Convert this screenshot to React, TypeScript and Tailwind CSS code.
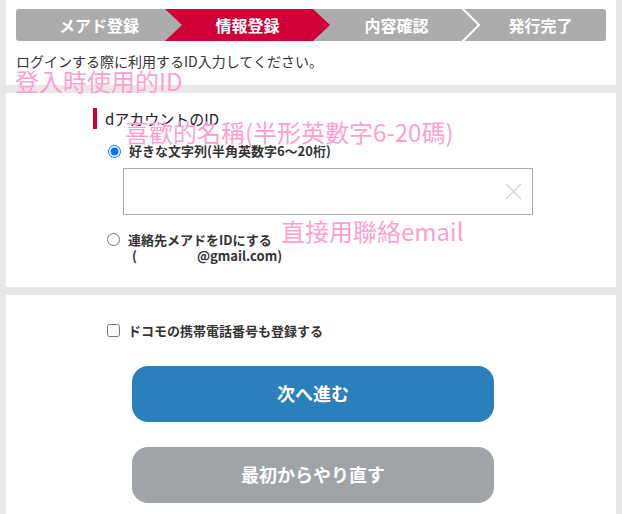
import { X } from "lucide-react";

const steps = ["メアド登録", "情報登録", "内容確認", "発行完了"];

function StepBar() {
  return (
    <div className="relative flex h-8 overflow-hidden rounded-[3px] bg-[#acacac] text-[16px] font-bold text-white">
      <div className="mr-[-17px] flex w-[166px] shrink-0 items-center justify-center">
        {steps[0]}
      </div>
      <div className="relative z-10 mr-[-17px] flex w-[165px] shrink-0 items-center justify-center bg-[#cf0037] [clip-path:polygon(0_0,148px_0,165px_50%,148px_100%,0_100%,17px_50%)]">
        {steps[1]}
      </div>
      <div className="relative mr-[-17px] flex w-[167px] shrink-0 items-center justify-center">
        {steps[2]}
        <svg
          className="absolute right-0 top-0"
          width="18"
          height="32"
          viewBox="0 0 18 32"
        >
          <polyline
            points="0,-1 17,16 0,33"
            fill="none"
            stroke="white"
            strokeWidth="2"
          />
        </svg>
      </div>
      <div className="flex flex-1 items-center justify-center pl-[12px]">
        {steps[3]}
      </div>
    </div>
  );
}

export default function App() {
  return (
    <div className="relative min-h-screen bg-[#e8e8e8] px-[6px] font-['Noto_Sans_CJK_JP',sans-serif] text-[#333]">
      <div className="flex flex-col gap-[8px]">
        <section className="h-[85px] bg-white px-[10px] pt-[9px]">
          <StepBar />
          <p className="mt-[10px] text-[14px] leading-[20px]">
            ログインする際に利用するID入力してください。
          </p>
        </section>

        <section className="h-[194px] bg-white pl-[87px] pt-[15px]">
          <h2 className="h-[21px] border-l-4 border-[#cf0037] pl-[8px] text-[15px] leading-[21px] text-[#222]">
            dアカウントのID
          </h2>
          <label className="mt-[15px] ml-[15px] flex h-[14px] items-center gap-[8px] text-[13px] font-bold">
            <input type="radio" name="idtype" defaultChecked className="m-0 h-[13px] w-[13px]" />
            好きな文字列(半角英数字6～20桁)
          </label>
          <div className="ml-[30px] mt-[10px] flex h-[47px] w-[410px] items-center justify-end border border-[#aaa] pr-[4px]">
            <X className="h-[29px] w-[29px] text-[#d4d4d4]" strokeWidth={1.1} />
          </div>
          <label className="ml-[14px] mt-[17px] flex items-start gap-[8px] text-[13px] font-bold leading-[16px]">
            <input type="radio" name="idtype" className="m-0 mt-[1px] h-[13px] w-[13px]" />
            <span>
              連絡先メアドをIDにする
              <br />
              <span className="pl-[4px]">(</span>
              <span className="inline-block w-[60px]" />
              @gmail.com)
            </span>
          </label>
        </section>

        <section className="bg-white pb-[40px] pt-[26px]">
          <label className="ml-[101px] flex items-center gap-[8px] text-[13px] font-bold">
            <input type="checkbox" className="m-0 h-[13px] w-[13px]" />
            ドコモの携帯電話番号も登録する
          </label>
          <div className="mt-[25px] flex flex-col items-center gap-[25px] pl-[4px]">
            <button className="h-[56px] w-[362px] rounded-[16px] bg-[#2b80bb] text-[18px] font-bold text-white">
              次へ進む
            </button>
            <button className="h-[56px] w-[362px] rounded-[16px] bg-[#a0a4a8] text-[18px] font-bold text-white">
              最初からやり直す
            </button>
          </div>
        </section>
      </div>

      <span className="absolute left-[15px] top-[67px] font-['Noto_Sans_CJK_TC',sans-serif] text-[24px] leading-[28px] text-[#ff9fd0]">
        登入時使用的ID
      </span>
      <span className="absolute left-[125px] top-[118px] font-['Noto_Sans_CJK_TC',sans-serif] text-[24px] leading-[28px] text-[#ff9fd0]">
        喜歡的名稱(半形英數字6-20碼)
      </span>
      <span className="absolute left-[281px] top-[217px] font-['Noto_Sans_CJK_TC',sans-serif] text-[24px] leading-[28px] text-[#ff9fd0]">
        直接用聯絡email
      </span>
    </div>
  );
}
